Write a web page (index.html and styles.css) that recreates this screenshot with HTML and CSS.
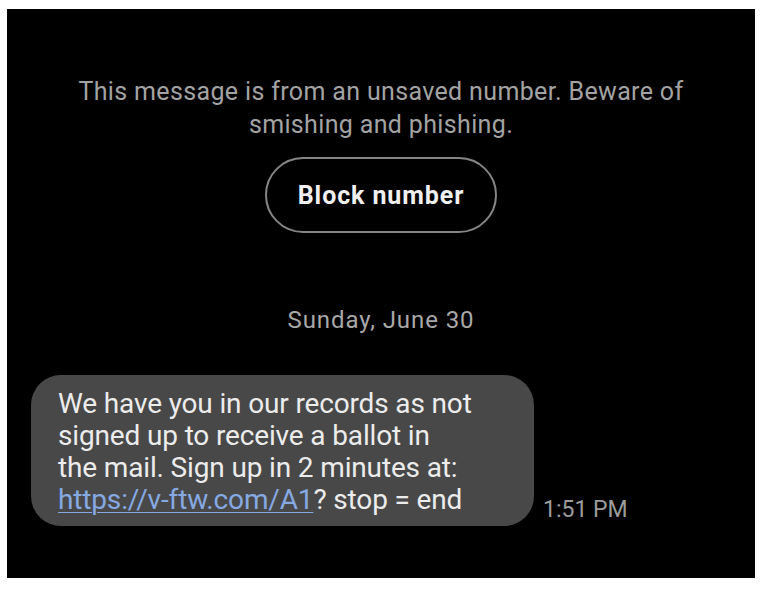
FILE: index.html
```html
<!DOCTYPE html>
<html>
<head>
<meta charset="utf-8">
<link rel="stylesheet" href="styles.css">
</head>
<body>
<div class="screen">
  <p class="notice">This message is from an unsaved number. Beware of<br>smishing and phishing.</p>
  <button class="block-btn">Block number</button>
  <p class="date">Sunday, June 30</p>
  <div class="msg-row">
    <div class="bubble">We have you in our records as not<br>signed up to receive a ballot in<br>the mail. Sign up in 2 minutes at:<br><a class="link" href="#">https://v-ftw.com/A1</a>? stop = end</div>
    <span class="time">1:51 PM</span>
  </div>
</div>
</body>
</html>
```

FILE: styles.css
```css
html, body {
  margin: 0;
  padding: 0;
  background: #ffffff;
}
body {
  width: 764px;
  height: 591px;
  font-family: Roboto, "Liberation Sans", sans-serif;
}
.screen {
  margin: 9px 0 0 7px;
  width: 748px;
  height: 569px;
  background: #000000;
  display: flex;
  flex-direction: column;
  align-items: center;
  box-sizing: border-box;
  padding-top: 66px;
}
.notice {
  margin: 0;
  color: #a3a3a3;
  font-size: 25px;
  line-height: 33px;
  letter-spacing: 0.35px;
  text-align: center;
}
.block-btn {
  margin-top: 16px;
  width: 232px;
  height: 76px;
  border: 2px solid #858585;
  border-radius: 38px;
  background: #000;
  color: #f0f0f0;
  font-family: Roboto, "Liberation Sans", sans-serif;
  font-weight: 700;
  font-size: 25px;
  letter-spacing: 0.9px;
  padding: 0;
}
.date {
  margin: 72px 0 0;
  color: #a8a8a8;
  font-size: 24px;
  line-height: 30px;
  letter-spacing: 0.9px;
}
.msg-row {
  align-self: stretch;
  display: flex;
  align-items: flex-end;
  margin-top: 40px;
  padding-left: 24px;
}
.bubble {
  width: 503px;
  box-sizing: border-box;
  background: #484848;
  border-radius: 30px;
  padding: 13px 10px 10px 27px;
  color: #ececec;
  font-size: 28px;
  line-height: 32px;
  letter-spacing: -0.15px;
  white-space: nowrap;
}
.link {
  color: #86a9e2;
  text-decoration: underline;
  text-decoration-thickness: 1px;
  text-underline-offset: 3px;
}
.time {
  margin-left: 9px;
  margin-bottom: 3px;
  color: #9c9c9c;
  font-size: 23px;
  line-height: 26px;
}
```
